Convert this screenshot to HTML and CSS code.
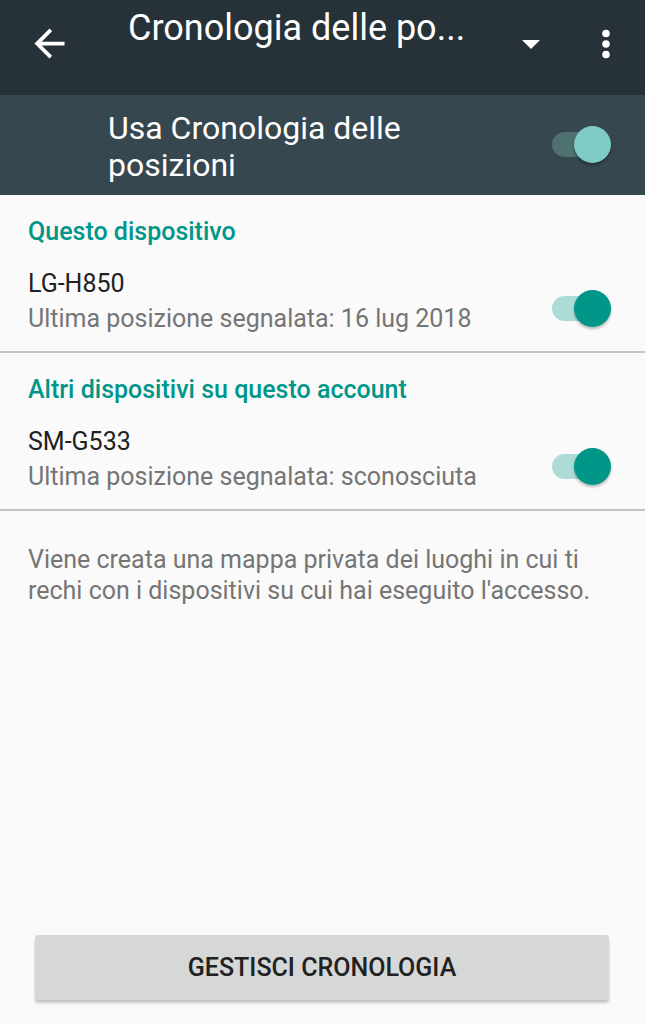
FILE: index.html
```html
<!DOCTYPE html>
<html lang="it">
<head>
  <meta charset="UTF-8">
  <title>Cronologia delle posizioni</title>
  <meta name="viewport" content="width=device-width, initial-scale=1.0">
  <link rel="stylesheet" href="styles.css">
</head>
<body>
  <div class="app">
    <div class="topbar">
      <svg class="icon-back" width="45" height="45" viewBox="0 0 24 24"><path d="M20 11H7.83l5.59-5.59L12 4l-8 8 8 8 1.41-1.41L7.83 13H20v-2z" fill="#fff"/></svg>
      <div class="title">Cronologia delle po...</div>
      <svg class="icon-drop" width="18" height="9" viewBox="0 0 18 9"><path d="M0 0h18L9 9z" fill="#fff"/></svg>
      <svg class="icon-more" width="10" height="30" viewBox="0 0 10 30"><circle cx="5" cy="4.5" r="3.8" fill="#fff"/><circle cx="5" cy="15" r="3.8" fill="#fff"/><circle cx="5" cy="25.5" r="3.8" fill="#fff"/></svg>
    </div>
    <div class="master">
      <div class="master-label">Usa Cronologia delle posizioni</div>
      <span class="switch switch-light"><span class="track"></span><span class="thumb"></span></span>
    </div>

    <div class="section">
      <div class="section-title">Questo dispositivo</div>
      <div class="row">
        <div class="row-text">
          <div class="row-name">LG-H850</div>
          <div class="row-sub">Ultima posizione segnalata: 16 lug 2018</div>
        </div>
        <span class="switch"><span class="track"></span><span class="thumb"></span></span>
      </div>
    </div>

    <div class="section">
      <div class="section-title">Altri dispositivi su questo account</div>
      <div class="row">
        <div class="row-text">
          <div class="row-name">SM-G533</div>
          <div class="row-sub">Ultima posizione segnalata: sconosciuta</div>
        </div>
        <span class="switch"><span class="track"></span><span class="thumb"></span></span>
      </div>
    </div>

    <p class="note">Viene creata una mappa privata dei luoghi in cui ti rechi con i dispositivi su cui hai eseguito l'accesso.</p>

    <div class="spacer"></div>
    <div class="footer">
      <button class="btn-manage">GESTISCI CRONOLOGIA</button>
    </div>
  </div>
</body>
</html>
```

FILE: styles.css
```css
body { margin: 0; background: #fafafa; font-family: Roboto, "Noto Sans", sans-serif; }
.app { width: 645px; height: 1024px; display: flex; flex-direction: column; background: #fafafa; overflow: hidden; }

/* barra superiore */
.topbar { height: 95px; background: #263238; display: flex; align-items: flex-start; color: #fff; flex: none; }
.icon-back { margin: 21px 0 0 27px; flex: none; }
.title { margin: 6px 0 0 56px; font-size: 36px; line-height: 44px; flex: 1; white-space: nowrap; }
.icon-drop { margin: 40px 0 0 0; flex: none; }
.icon-more { margin: 29px 34px 0 61px; flex: none; }

.master { height: 100px; background: #37474f; display: flex; align-items: flex-start; padding: 0 34px 0 108px; flex: none; box-sizing: border-box; }
.master-label { flex: 1; color: #fff; font-size: 32px; line-height: 37px; padding: 15px 150px 0 0; }
.master .switch { margin-top: 30px; }

/* interruttori */
.switch { position: relative; width: 60px; height: 38px; flex: none; }
.switch .track { position: absolute; left: 1px; top: 6.5px; width: 48px; height: 25px; border-radius: 12.5px; background: #addcd7; }
.switch .thumb { position: absolute; right: 0; top: 0.5px; width: 37px; height: 37px; border-radius: 50%; background: #009688; box-shadow: 0 2px 3px rgba(0,0,0,0.28); }
.switch-light .track { background: #4f7170; }
.switch-light .thumb { background: #80cbc4; box-shadow: 0 2px 3px rgba(0,0,0,0.35); }

.section { border-bottom: 2px solid #c4c4c4; padding: 22px 34px 17px 28px; }
.section-title { color: #009688; font-weight: 500; font-size: 25px; line-height: 30px; }
.row { display: flex; align-items: flex-start; margin-top: 22px; }
.row-text { flex: 1; }
.row-name { color: #212121; font-size: 25px; line-height: 30px; }
.row-sub { color: #757575; font-size: 25px; line-height: 30px; margin-top: 5px; }
.row .switch { margin-top: 20px; }

.note { margin: 33px 34px 0 28px; color: #757575; font-size: 25px; line-height: 31px; }

.spacer { flex: 1; }
.footer { padding: 0 36px 24px 35px; flex: none; }
.btn-manage { display: block; width: 100%; height: 65px; border: none; border-radius: 3px; background: #d6d7d7; color: #212121; font-family: Roboto, sans-serif; font-size: 25px; font-weight: 500; box-shadow: 0 3px 3px rgba(0,0,0,0.22); padding: 0; }
```
